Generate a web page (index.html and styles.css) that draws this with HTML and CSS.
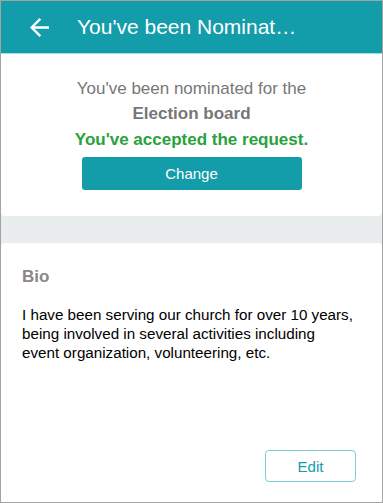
FILE: index.html
```html
<!DOCTYPE html>
<html>
<head>
<meta charset="utf-8">
<link rel="stylesheet" href="styles.css">
</head>
<body>
<div class="frame">
  <header class="topbar">
    <svg class="back" viewBox="4 4 16 16" width="19" height="19"><path d="M20 11H7.83l5.59-5.59L12 4l-8 8 8 8 1.41-1.41L7.83 13H20v-2z" fill="#fff"/></svg>
    <div class="title">You've been Nominated for the Election board</div>
  </header>
  <section class="card status">
    <div class="line">You've been nominated for the</div>
    <div class="line strong">Election board</div>
    <div class="accepted">You've accepted the request.</div>
    <button class="btn-change">Change</button>
  </section>
  <div class="gap"></div>
  <section class="card bio">
    <div class="bio-title">Bio</div>
    <p class="bio-text">I have been serving our church for over 10 years, being involved in several activities including event organization, volunteering, etc.</p>
    <div class="actions"><button class="btn-edit">Edit</button></div>
  </section>
</div>
</body>
</html>
```
FILE: styles.css
```css
html, body { margin: 0; padding: 0; }
body { font-family: "Liberation Sans", Arial, sans-serif; }
.frame {
  width: 383px; height: 503px; box-sizing: border-box;
  border: 1px solid #a3a3a3; background: #eaeded;
  display: flex; flex-direction: column; overflow: hidden;
}
.topbar {
  height: 52px; flex: none; background: #139ca9;
  border-bottom: 1px solid #a6dde2;
  display: flex; align-items: center; padding-left: 29px;
}
.back { display: block; flex: none; }
.title {
  color: #fff; font-size: 21px; margin-left: 28px;
  width: 224px; white-space: nowrap; overflow: hidden; text-overflow: ellipsis;
}
.card { background: #fff; border-radius: 4px; }
.status {
  border-top-left-radius: 0; border-top-right-radius: 0;
  height: 162px; box-sizing: border-box; padding-top: 22px;
  display: flex; flex-direction: column; align-items: center;
}
.line { color: #777; font-size: 17px; line-height: 25px; }
.strong { font-weight: bold; }
.accepted { color: #2aa13c; font-weight: bold; font-size: 17px; line-height: 26px; margin-top: 1px; }
.btn-change {
  margin-top: 4px; width: 220px; height: 33px; border: none; border-radius: 3px;
  background: #139ca9; color: #fff; font-family: inherit; font-size: 15px;
}
.gap { height: 27px; flex: none; }
.bio {
  flex: 1; border-bottom-left-radius: 0; border-bottom-right-radius: 0;
  padding: 24px 26px 20px 21px; display: flex; flex-direction: column;
}
.bio-title { color: #888; font-weight: bold; font-size: 17px; line-height: 20px; }
.bio-text { margin: 18px 0 0; width: 331px; color: #000; font-size: 15.2px; line-height: 19px; }
.actions { margin-top: auto; display: flex; justify-content: flex-end; }
.btn-edit {
  width: 91px; height: 32px; background: #fff; border: 1px solid #7fcbd2; border-radius: 4px;
  color: #139ca9; font-family: inherit; font-size: 15px;
}
```
